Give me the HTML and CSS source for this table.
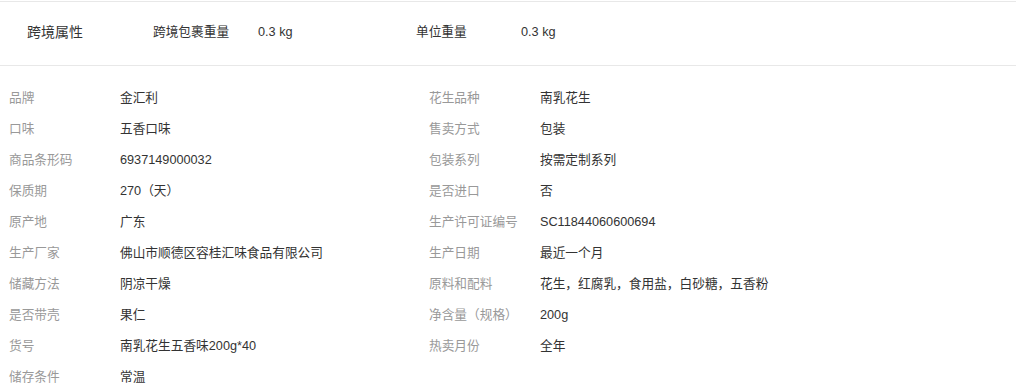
FILE: index.html
```html
<!DOCTYPE html>
<html lang="zh-CN">
<head>
<meta charset="utf-8">
<title>商品属性</title>
<link rel="stylesheet" href="styles.css">
</head>
<body>
<div class="cross">
  <div class="cross-title">跨境属性</div>
  <div class="cross-item">
    <span class="cross-label">跨境包裹重量</span>
    <span class="cross-value">0.3 kg</span>
  </div>
  <div class="cross-item">
    <span class="cross-label">单位重量</span>
    <span class="cross-value">0.3 kg</span>
  </div>
</div>
<div class="attrs">
  <div class="attr"><span class="label">品牌</span><span class="value">金汇利</span></div>
  <div class="attr"><span class="label">花生品种</span><span class="value">南乳花生</span></div>
  <div class="attr"><span class="label">口味</span><span class="value">五香口味</span></div>
  <div class="attr"><span class="label">售卖方式</span><span class="value">包装</span></div>
  <div class="attr"><span class="label">商品条形码</span><span class="value">6937149000032</span></div>
  <div class="attr"><span class="label">包装系列</span><span class="value">按需定制系列</span></div>
  <div class="attr"><span class="label">保质期</span><span class="value">270（天）</span></div>
  <div class="attr"><span class="label">是否进口</span><span class="value">否</span></div>
  <div class="attr"><span class="label">原产地</span><span class="value">广东</span></div>
  <div class="attr"><span class="label">生产许可证编号</span><span class="value">SC11844060600694</span></div>
  <div class="attr"><span class="label">生产厂家</span><span class="value">佛山市顺德区容桂汇味食品有限公司</span></div>
  <div class="attr"><span class="label">生产日期</span><span class="value">最近一个月</span></div>
  <div class="attr"><span class="label">储藏方法</span><span class="value">阴凉干燥</span></div>
  <div class="attr"><span class="label">原料和配料</span><span class="value">花生，红腐乳，食用盐，白砂糖，五香粉</span></div>
  <div class="attr"><span class="label">是否带壳</span><span class="value">果仁</span></div>
  <div class="attr"><span class="label">净含量（规格）</span><span class="value">200g</span></div>
  <div class="attr"><span class="label">货号</span><span class="value">南乳花生五香味200g*40</span></div>
  <div class="attr"><span class="label">热卖月份</span><span class="value">全年</span></div>
  <div class="attr"><span class="label">储存条件</span><span class="value">常温</span></div>
</div>
</body>
</html>
```
FILE: styles.css
```css
html, body {
  margin: 0;
  padding: 0;
  background: #fff;
}
body {
  font-family: "Liberation Sans", "Noto Sans CJK SC", sans-serif;
  font-size: 12.7px;
  color: #333;
}
.cross {
  margin-top: 1px;
  border-top: 1px solid #e8e8e8;
  border-bottom: 1px solid #e8e8e8;
  display: flex;
  align-items: center;
  padding-left: 27px;
  box-sizing: border-box;
  height: 65px;
  padding-bottom: 3px;
  line-height: 18px;
}
.cross-title {
  font-size: 14px;
  width: 126px;
  color: #333;
}
.cross-item {
  display: flex;
  align-items: center;
  width: 263px;
}
.cross-label {
  width: 105px;
  color: #333;
}
.cross-value {
  color: #333;
}
.attrs {
  padding: 17px 0 0 9px;
  display: grid;
  grid-template-columns: 420px 420px;
}
.attr {
  display: flex;
  height: 31px;
  line-height: 31px;
  white-space: nowrap;
}
.label {
  width: 111px;
  color: #999;
}
.value {
  color: #333;
}
```
